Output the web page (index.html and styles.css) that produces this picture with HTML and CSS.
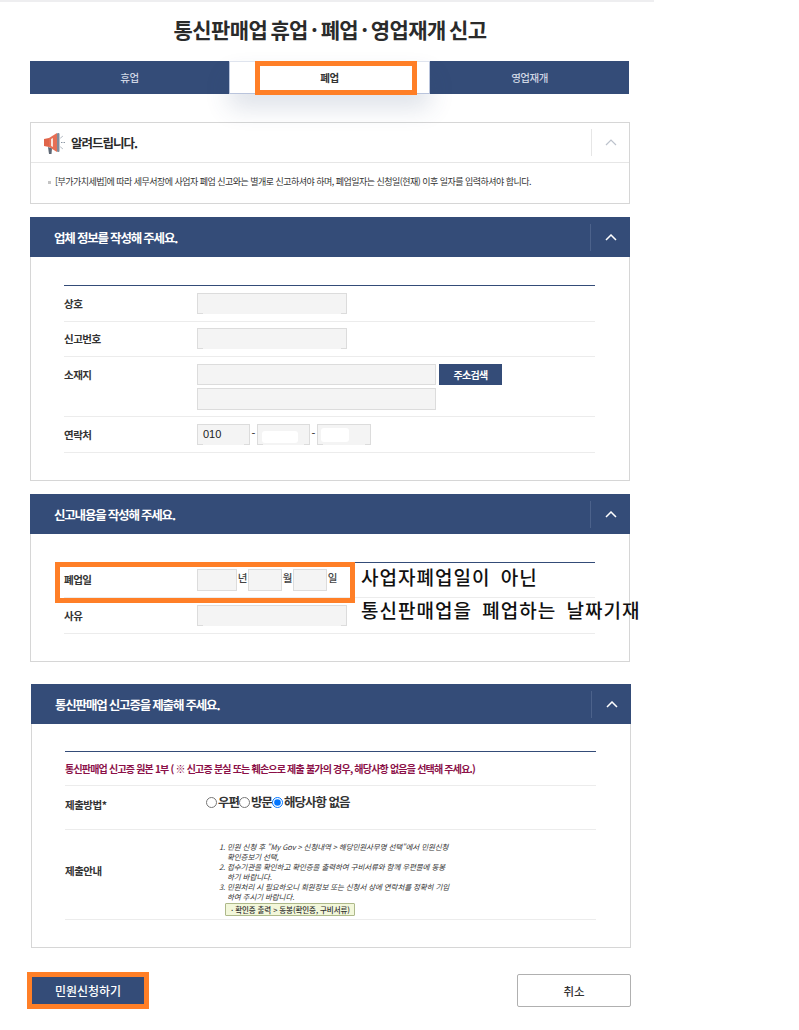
FILE: index.html
```html
<!DOCTYPE html>
<html lang="ko">
<head>
    <meta charset="utf-8">
    <title>통신판매업 휴업·폐업·영업재개 신고</title>
    <link rel="stylesheet" href="styles.css">
</head>
<body>
    <div class="page">
        <h1 class="title">통신판매업 휴업 · 폐업 · 영업재개 신고</h1>

        <div class="tabs">
            <a class="tab">휴업</a>
            <a class="tab tab-on">폐업<span class="mark mark-tab"></span></a>
            <a class="tab">영업재개</a>
        </div>

        <div class="notice">
            <div class="notice-head">
                <svg class="megaphone" width="22" height="22" viewBox="0 0 22 22">
                    <path d="M1 7 L6 6 L6 15 L1 14 Z" fill="#e0654a"/>
                    <path d="M6 6 L14 1 L14 20 L6 15 Z" fill="#e66f55"/>
                    <path d="M8 7 L10 6 L10 15 L8 14 Z" fill="#f8e3da"/>
                    <path d="M5 15 L9 16.500 L8.500 22 L6 22 Z" fill="#5f6875"/>
                    <rect x="14" y="1" width="2.500" height="19" rx="1" fill="#7f8b9a"/>
                    <path d="M18 10.500 H22 M17.500 6 L20 4 M17.500 15 L20 17" stroke="#8e98a4" stroke-width="1" stroke-dasharray="1.500 1"/>
                </svg>
                <strong class="notice-title">알려드립니다.</strong>
                <span class="notice-toggle">
                    <svg width="12" height="7" viewBox="0 0 12 7"><polyline points="1,6 6,1 11,6" fill="none" stroke="#bcc2cc" stroke-width="1.200"/></svg>
                </span>
            </div>
            <p class="notice-text">[부가가치세법]에 따라 세무서장에 사업자 폐업 신고와는 별개로 신고하셔야 하며, 폐업일자는 신청일(현재) 이후 일자를 입력하셔야 합니다.</p>
        </div>

        <div class="panel">
            <div class="panel-head">
                <h2>업체 정보를 작성해 주세요.</h2>
                <span class="panel-toggle">
                    <svg width="12" height="7" viewBox="0 0 12 7"><polyline points="1,6 6,1 11,6" fill="none" stroke="#fff" stroke-width="1.500"/></svg>
                </span>
            </div>
            <div class="panel-body">
                <div class="rows">
                    <div class="row row-top">
                        <div class="label">상호</div>
                        <div class="field"><span class="input input-wide input-wiped"></span></div>
                    </div>
                    <div class="row">
                        <div class="label">신고번호</div>
                        <div class="field"><span class="input input-wide input-wiped"></span></div>
                    </div>
                    <div class="row row-top row-addr">
                        <div class="label">소재지</div>
                        <div class="field field-stack">
                            <div class="field">
                                <span class="input input-addr"></span>
                                <button class="btn-search">주소검색</button>
                            </div>
                            <span class="input input-addr input-tall"></span>
                        </div>
                    </div>
                    <div class="row row-top">
                        <div class="label">연락처</div>
                        <div class="field field-tel">
                            <span class="input input-tel input-wiped">010</span>
                            <span class="dash">-</span>
                            <span class="input input-tel input-wiped"><i class="blob blob-a"></i></span>
                            <span class="dash">-</span>
                            <span class="input input-tel input-wiped"><i class="blob blob-b"></i></span>
                        </div>
                    </div>
                </div>
            </div>
        </div>

        <div class="panel">
            <div class="panel-head">
                <h2>신고내용을 작성해 주세요.</h2>
                <span class="panel-toggle">
                    <svg width="12" height="7" viewBox="0 0 12 7"><polyline points="1,6 6,1 11,6" fill="none" stroke="#fff" stroke-width="1.500"/></svg>
                </span>
            </div>
            <div class="panel-body">
                <div class="rows">
                    <div class="row row-date">
                        <div class="label">폐업일</div>
                        <div class="field field-date">
                            <span class="input input-year"></span><span class="unit">년</span>
                            <span class="input input-month"></span><span class="unit">월</span>
                            <span class="input input-month"></span><span class="unit">일</span>
                        </div>
                        <span class="mark mark-date"></span>
                        <div class="memo">
                            <p>사업자폐업일이 아닌</p>
                            <p>통신판매업을 폐업하는 날짜기재</p>
                        </div>
                    </div>
                    <div class="row row-top">
                        <div class="label">사유</div>
                        <div class="field"><span class="input input-wide input-wiped"></span></div>
                    </div>
                </div>
            </div>
        </div>

        <div class="panel panel-last">
            <div class="panel-head">
                <h2>통신판매업 신고증을 제출해 주세요.</h2>
                <span class="panel-toggle">
                    <svg width="12" height="7" viewBox="0 0 12 7"><polyline points="1,6 6,1 11,6" fill="none" stroke="#fff" stroke-width="1.500"/></svg>
                </span>
            </div>
            <div class="panel-body panel-body-last">
                <div class="rows">
                    <div class="row row-warn">통신판매업 신고증 원본 1부 ( ※ 신고증 분실 또는 훼손으로 제출 불가의 경우, 해당사항 없음을 선택해 주세요.)</div>
                    <div class="row row-method">
                        <div class="label label-wide">제출방법*</div>
                        <div class="radios">
                            <label><input type="radio" name="way">우편</label>
                            <label><input type="radio" name="way">방문</label>
                            <label><input type="radio" name="way" checked>해당사항 없음</label>
                        </div>
                    </div>
                    <div class="row row-guide">
                        <div class="label label-wide">제출안내</div>
                        <div class="guide">
                            <ol>
                                <li>민원 신청 후 "My Gov &gt; 신청내역 &gt; 해당민원사무명 선택"에서 민원신청 확인증보기 선택,</li>
                                <li>접수기관을 확인하고 확인증을 출력하여 구비서류와 함께 우편물에 동봉 하기 바랍니다.</li>
                                <li>민원처리 시 필요하오니 회원정보 또는 신청서 상에 연락처를 정확히 기입 하여 주시기 바랍니다.</li>
                            </ol>
                            <div class="guide-box">· 확인증 출력 &gt; 동봉(확인증, 구비서류)</div>
                        </div>
                    </div>
                </div>
            </div>
        </div>

        <div class="actions">
            <button class="btn-submit">민원신청하기</button>
            <button class="btn-cancel">취소</button>
        </div>
    </div>
</body>
</html>
```

FILE: styles.css
```css
* {
    box-sizing: border-box;
}
body {
    margin: 0;
    background-color: #fff;
    color: #222;
    font-family: "Noto Sans CJK KR", "Noto Sans", sans-serif;
}
.page {
    width: 654px;
    height: 1030px;
    padding: 0 23px 0 30px;
    border-top: 2px solid #eeeef0;
}
.title {
    margin: 12px 0 0;
    height: 47px;
    font-size: 21px;
    line-height: 30px;
    font-weight: 700;
    letter-spacing: -0.6px;
    word-spacing: -2px;
    text-align: center;
    color: #2b2b2b;
    width: 600px;
}

/* tabs */
.tabs {
    display: flex;
    width: 599px;
    height: 33px;
    background-color: #344c78;
}
.tab {
    flex: 1;
    position: relative;
    text-align: center;
    font-size: 10.5px;
    font-weight: 500;
    line-height: 33px;
    letter-spacing: -0.5px;
    color: #cfd6e4;
}
.tab-on {
    background-color: #fff;
    color: #333;
    font-weight: 700;
    border: 1px solid #b9c4dc;
    border-top-color: #dfe4ee;
    line-height: 31px;
    box-shadow: 0 14px 24px rgba(52, 76, 120, 0.16);
}
.mark {
    position: absolute;
    border: 5px solid #ff7f27;
}
.mark-tab {
    left: 25px;
    top: -1px;
    width: 162px;
    height: 34px;
}

/* notice */
.notice {
    margin-top: 28px;
    width: 600px;
    height: 82px;
    border: 1px solid #d6d6d6;
}
.notice-head {
    display: flex;
    align-items: center;
    height: 40px;
    padding-left: 12px;
    border-bottom: 1px solid #e6e6e6;
}
.notice-title {
    margin-left: 6px;
    font-size: 12.5px;
    font-weight: 700;
    letter-spacing: -1px;
    color: #2b2b2b;
}
.notice-toggle {
    display: flex;
    align-items: center;
    justify-content: center;
    margin-left: auto;
    margin-right: 0;
    width: 38px;
    height: 27px;
    border-left: 1px solid #e6e6e6;
}
.notice-text {
    position: relative;
    margin: 0;
    padding: 12px 0 0 24px;
    font-size: 9px;
    line-height: 14px;
    letter-spacing: -0.53px;
    color: #333;
    white-space: nowrap;
}
.notice-text::before {
    content: "";
    position: absolute;
    left: 17px;
    top: 18px;
    width: 3px;
    height: 3px;
    background-color: #c4c4c4;
}

/* panels */
.panel {
    margin-top: 13px;
    width: 600px;
}
.panel-last {
    margin-top: 22px;
    margin-left: 1px;
}
.panel-head {
    display: flex;
    align-items: center;
    justify-content: space-between;
    height: 40px;
    padding-left: 24px;
    background-color: #344c78;
}
.panel-head h2 {
    margin: 0;
    font-size: 12.5px;
    font-weight: 700;
    letter-spacing: -1.2px;
    color: #fff;
}
.panel-toggle {
    display: flex;
    align-items: center;
    justify-content: center;
    width: 40px;
    height: 27px;
    border-left: 1px solid #4c628b;
}
.panel-body {
    padding: 28px 34px 27px 33px;
    border: 1px solid #d6d6d6;
    border-top: 0;
}
.panel-body-last {
    padding-top: 27px;
}
.rows {
    border-top: 1px solid #344c78;
}
.row {
    position: relative;
    display: flex;
    align-items: flex-start;
    padding: 6px 0 7px;
    border-bottom: 1px solid #ececec;
}
.row-top {
    padding-top: 7px;
}
.row-addr {
    padding-bottom: 6px;
}
.label {
    flex: 0 0 133px;
    font-size: 10.5px;
    font-weight: 700;
    line-height: 21px;
    letter-spacing: -0.5px;
    color: #333;
}
.field {
    display: flex;
    align-items: flex-start;
}
.field-stack {
    flex-direction: column;
    gap: 3px;
}
.input {
    position: relative;
    display: block;
    height: 21px;
    border: 1px solid #dcdcdc;
    background-color: #f4f4f4;
    font-family: "Liberation Sans", sans-serif;
    font-size: 11px;
    line-height: 19px;
    padding-left: 5px;
}
.input-wide {
    width: 150px;
}
.input-addr {
    width: 239px;
}
.input-tall {
    height: 22px;
}
.input-tel {
    width: 53px;
}
/* the bottom edge is painted out in the shot */
.input-wiped::after {
    content: "";
    position: absolute;
    left: 5px;
    right: 5px;
    bottom: -1px;
    height: 1px;
    background-color: #f4f4f4;
}
.blob {
    position: absolute;
    background-color: #fff;
    border-radius: 3px;
}
.blob-a {
    left: 4px;
    top: 6px;
    width: 36px;
    height: 12px;
}
.blob-b {
    left: 3px;
    top: 3px;
    width: 28px;
    height: 14px;
}
.dash {
    width: 7px;
    font-size: 11px;
    line-height: 19px;
    text-align: center;
}
.field-tel .input:last-child {
    width: 54px;
}
.btn-search {
    margin-left: 3px;
    width: 63px;
    height: 21px;
    padding: 0;
    border: 0;
    background-color: #344c78;
    color: #fff;
    font-family: inherit;
    font-size: 10px;
    font-weight: 700;
    letter-spacing: -0.7px;
}

/* date row */
.row-date {
    padding: 6px 0;
}
.field-date .input {
    height: 22px;
}
.input-year {
    width: 40px;
}
.input-month {
    width: 34px;
}
.unit {
    width: 11px;
    text-align: center;
    font-size: 10.5px;
    font-weight: 500;
    line-height: 18px;
    color: #444;
}
.mark-date {
    left: -9px;
    top: -1px;
    width: 300px;
    height: 41px;
}
.memo {
    position: absolute;
    left: 297px;
    top: 0;
    font-size: 19px;
    font-weight: 500;
    letter-spacing: 1px;
    word-spacing: 4px;
    color: #111;
    white-space: nowrap;
}
.memo p {
    margin: 0;
    height: 33px;
    line-height: 28px;
}

/* last panel rows */
.row-warn {
    padding: 9px 0 8px;
    font-size: 10px;
    font-weight: 700;
    line-height: 16px;
    letter-spacing: -0.8px;
    color: #8b1048;
    white-space: nowrap;
}
.row-method {
    height: 44px;
    padding: 7px 0 0;
}
.label-wide {
    flex-basis: 141px;
    line-height: 24px;
}
.radios {
    display: flex;
    font-size: 12.5px;
    font-weight: 700;
    line-height: 18px;
    letter-spacing: -1px;
    color: #333;
}
.radios label {
    display: flex;
    align-items: center;
}
.radios input {
    margin: 0 1px 0 0;
    width: 11px;
    height: 11px;
}
.row-guide {
    height: 90px;
    padding: 12px 0 0;
}
.row-guide .label {
    line-height: 58px;
    margin-right: 15px;
    flex-basis: 140px;
}
.guide {
    width: 232px;
    margin-left: -2px;
    font-size: 7.5px;
    line-height: 10px;
    letter-spacing: -0.1px;
    font-style: italic;
    color: #333;
}
.guide ol {
    margin: 0;
    padding-left: 9px;
}
.guide-box {
    margin: 1px 0 0 7px;
    width: 130px;
    height: 13px;
    border: 1px solid #aeb98a;
    border-radius: 1px;
    background-color: #f2f7da;
    font-style: normal;
    font-weight: 500;
    line-height: 11px;
    padding-left: 5px;
}

/* bottom buttons */
.actions {
    display: flex;
    justify-content: space-between;
    align-items: flex-start;
    margin-top: 24px;
    width: 601px;
}
.btn-submit {
    margin-left: -3px;
    width: 122px;
    height: 37px;
    border: 5px solid #ff7f27;
    background-color: #344c78;
    color: #fff;
    font-family: inherit;
    font-size: 12px;
    font-weight: 500;
}
.btn-cancel {
    margin-top: 2px;
    width: 114px;
    height: 33px;
    border: 1px solid #b0b0b0;
    border-radius: 2px;
    background-color: #fff;
    color: #333;
    font-family: inherit;
    font-size: 11.5px;
    font-weight: 500;
}
```
